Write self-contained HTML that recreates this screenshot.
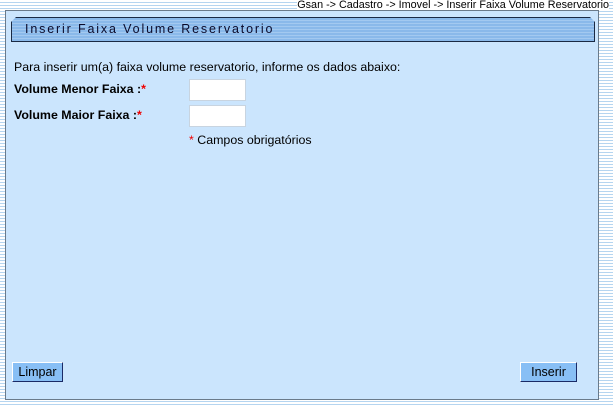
<!DOCTYPE html>
<html><head><style>
body{margin:0;width:613px;height:405px;position:relative;overflow:hidden;font-family:"Liberation Sans",Arial,sans-serif;
background:repeating-linear-gradient(#fff 0,#fff 2px,#b5d5f0 2px,#b5d5f0 3px);}
.crumb{position:absolute;right:4px;top:-1px;font-size:10.8px;color:#000;background:#fff;line-height:12px}
.panel{position:absolute;left:5px;top:10px;width:594px;height:390px;background:#cbe5fd;border:1px solid #6a7a8a;box-sizing:border-box}
.title{position:absolute;left:11px;top:17px;width:584px;height:25px;box-sizing:border-box;border:1px solid #1a2a44;
background:repeating-linear-gradient(#8ab9ea 0,#8ab9ea 2px,#a3c9f0 2px,#a3c9f0 3px);
clip-path:polygon(5px 0,calc(100% - 5px) 0,100% 5px,100% 100%,0 100%,0 5px);
font-size:12.5px;letter-spacing:1.85px;padding:4px 0 0 13px;color:#0a0a2a}
.t{position:absolute;font-size:12.4px;color:#000}
.b{font-weight:bold}
.r{color:#e00}
.inp{position:absolute;left:189px;width:57px;height:22px;background:#fff;border:1px solid #c8d4e0;box-sizing:border-box}
.btn{position:absolute;top:362px;height:20px;box-sizing:border-box;background:#88bff5;border:1px solid #fff;border-right-color:#1a2a66;border-bottom-color:#1a2a66;font-size:12.5px;text-align:center;line-height:18px;color:#000}
</style></head><body>
<div class="crumb">Gsan -&gt; Cadastro -&gt; Imovel -&gt; Inserir Faixa Volume Reservatorio</div>
<div class="panel"></div>
<div class="title">Inserir Faixa Volume Reservatorio</div>
<div class="t" style="left:14px;top:60px">Para inserir um(a) faixa volume reservatorio, informe os dados abaixo:</div>
<div class="t b" style="left:14px;top:82px">Volume Menor Faixa :<span class="r">*</span></div>
<div class="inp" style="top:79px"></div>
<div class="t b" style="left:14px;top:108px">Volume Maior Faixa :<span class="r">*</span></div>
<div class="inp" style="top:105px"></div>
<div class="t" style="left:189px;top:133px"><span class="r">*</span> Campos obrigatórios</div>
<div class="btn" style="left:12px;width:51px">Limpar</div>
<div class="btn" style="left:520px;width:57px">Inserir</div>
</body></html>
